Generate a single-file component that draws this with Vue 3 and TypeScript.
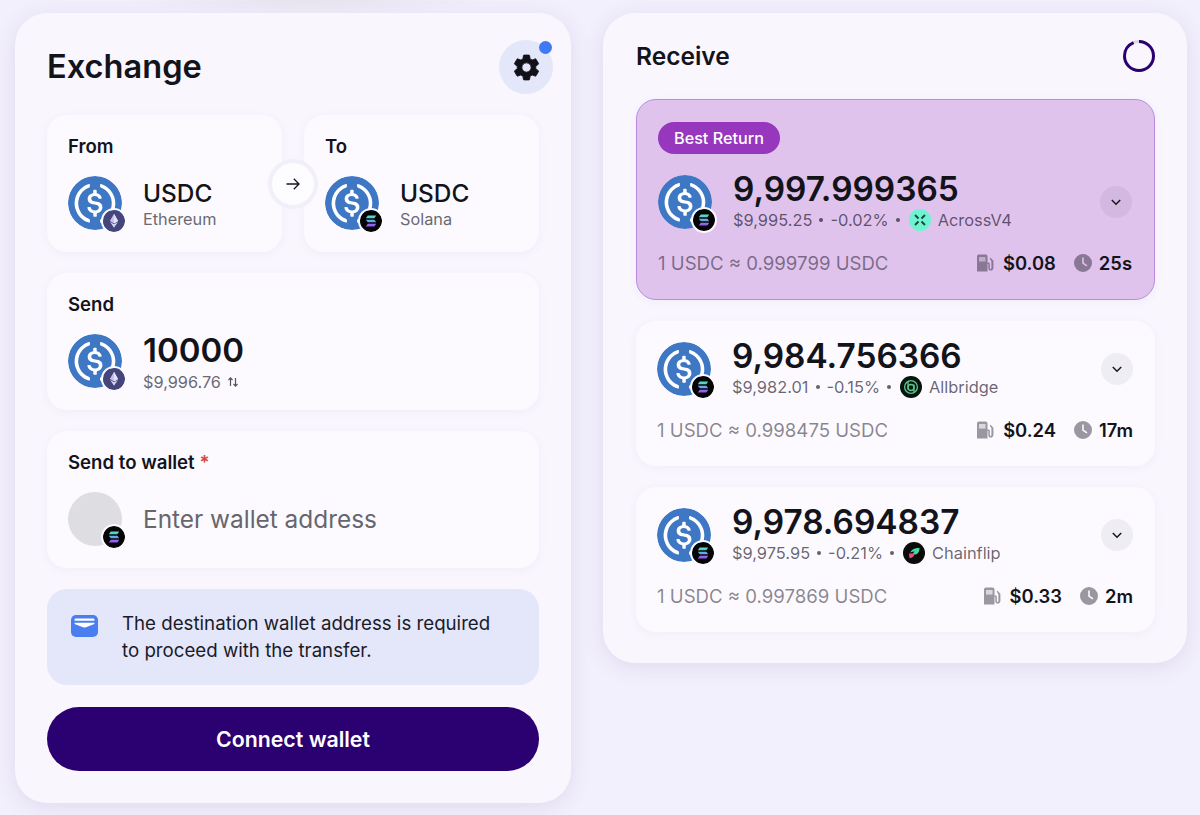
<script setup lang="ts">
interface Route {
  amount: string
  usd: string
  pct: string
  provider: string
  logo: string
  rate: string
  gas: string
  time: string
  best?: boolean
}

const routes: Route[] = [
  { amount: '9,997.999365', usd: '$9,995.25', pct: '-0.02%', provider: 'AcrossV4', logo: 'across', rate: '1 USDC ≈ 0.999799 USDC', gas: '$0.08', time: '25s', best: true },
  { amount: '9,984.756366', usd: '$9,982.01', pct: '-0.15%', provider: 'Allbridge', logo: 'allbridge', rate: '1 USDC ≈ 0.998475 USDC', gas: '$0.24', time: '17m' },
  { amount: '9,978.694837', usd: '$9,975.95', pct: '-0.21%', provider: 'Chainflip', logo: 'chainflip', rate: '1 USDC ≈ 0.997869 USDC', gas: '$0.33', time: '2m' },
]
</script>

<template>
  <svg class="defs" aria-hidden="true">
    <defs>
      <linearGradient id="solgrad" x1="0" y1="0" x2="0" y2="1">
        <stop offset="0" stop-color="#4fe3c0" />
        <stop offset="0.5" stop-color="#6aa6e8" />
        <stop offset="1" stop-color="#a04cf5" />
      </linearGradient>
      <symbol id="usdc" viewBox="0 0 2000 2000">
        <path d="M1000 2000c554.17 0 1000-445.83 1000-1000S1554.17 0 1000 0 0 445.83 0 1000s445.83 1000 1000 1000z" fill="#3e78c4" />
        <path d="M1275 1158.33c0-145.83-87.5-195.83-262.5-216.66-125-16.67-150-50-150-108.34s41.67-95.83 125-95.83c75 0 116.67 25 137.5 87.5 4.17 12.5 16.67 20.83 29.17 20.83h66.66c16.67 0 29.17-12.5 29.17-29.16v-4.17c-16.67-91.67-91.67-162.5-187.5-170.83v-100c0-16.67-12.5-29.17-33.33-33.34h-62.5c-16.67 0-29.17 12.5-33.34 33.34v95.83c-125 16.67-204.16 100-204.16 204.17 0 137.5 83.33 191.66 258.33 212.5 116.67 20.83 154.17 45.83 154.17 112.5s-58.34 112.5-137.5 112.5c-108.34 0-145.84-45.84-158.34-108.34-4.16-16.66-16.66-25-29.16-25h-70.84c-16.66 0-29.16 12.5-29.16 29.17v4.17c16.66 104.16 83.33 179.16 220.83 200v100c0 16.66 12.5 29.16 33.33 33.33h62.5c16.67 0 29.17-12.5 33.34-33.33v-100c125-20.84 208.33-108.34 208.33-220.84z" fill="#fff" />
        <path d="M787.5 1595.83c-325-116.66-491.67-479.16-370.83-800 62.5-175 200-308.33 370.83-370.83 16.67-8.33 25-20.83 25-41.67V325c0-16.67-8.33-29.17-25-33.33-4.17 0-12.5 0-16.67 4.16-395.83 125-612.5 545.84-487.5 941.67 75 233.33 254.17 412.5 487.5 487.5 16.67 8.33 33.34 0 37.5-16.67 4.17-4.16 4.17-8.33 4.17-16.66v-58.34c0-12.5-12.5-29.16-25-37.5zM1229.17 295.83c-16.67-8.33-33.34 0-37.5 16.67-4.17 4.17-4.17 8.33-4.17 16.67v58.33c0 16.67 12.5 33.33 25 41.67 325 116.66 491.67 479.16 370.83 800-62.5 175-200 308.33-370.83 370.83-16.67 8.33-25 20.83-25 41.67V1700c0 16.67 8.33 29.17 25 33.33 4.17 0 12.5 0 16.67-4.16 395.83-125 612.5-545.84 487.5-941.67-75-237.5-258.34-416.67-487.5-491.67z" fill="#fff" />
      </symbol>
      <symbol id="eth" viewBox="0 0 22 22">
        <circle cx="11" cy="11" r="11" fill="#45457c" />
        <path d="M11 3.800 6.900 11 11 13.400 15.100 11z" fill="#c3c0ea" />
        <path d="M11 3.800V13.400L15.100 11z" fill="#e4e2fa" />
        <path d="M7.100 12 11 17.800 14.900 12 11 14.300z" fill="#d6d4f3" />
      </symbol>
      <symbol id="sol" viewBox="0 0 22 22">
        <circle cx="11" cy="11" r="11" fill="#050505" />
        <path d="M7.800 5.600H16.200L14.400 8.300H5.800zM5.800 9.700H14.400L16.200 12.300H7.800zM7.800 13.700H16.200L14.400 16.400H5.800z" fill="url(#solgrad)" />
      </symbol>
      <symbol id="across" viewBox="0 0 22 22">
        <circle cx="11" cy="11" r="11" fill="#6cf3d0" />
        <path d="M6 6 9.500 9.500M16 6 12.500 9.500M6 16 9.500 12.500M16 16 12.500 12.500" fill="none" stroke="#24423c" stroke-width="1.800" />
      </symbol>
      <symbol id="allbridge" viewBox="0 0 22 22">
        <circle cx="11" cy="11" r="11" fill="#06150f" />
        <circle cx="11" cy="11" r="6.400" fill="none" stroke="#5fc78e" stroke-width="1.300" />
        <circle cx="11" cy="11.500" r="3" fill="none" stroke="#5fc78e" stroke-width="1.300" />
        <path d="M8 5.500v8M14 16.500v-8" fill="none" stroke="#5fc78e" stroke-width="1.300" />
      </symbol>
      <symbol id="chainflip" viewBox="0 0 22 22">
        <circle cx="11" cy="11" r="11" fill="#0b0b0b" />
        <path d="M7.500 10.500c.6-2.700 3.500-4.400 9-4.500 0 3.300-1 6-4.300 6.500H9.700c.4-1.500 1-2.300 2.100-3-1.700.1-3 .4-4.300 1z" fill="#46d9a1" />
        <path d="M6 11.500h5.400c0 2.700-1.900 4.500-4.800 4.700-.4-1.600-.6-3.200-.6-4.700z" fill="#f0468f" />
      </symbol>
      <symbol id="gas" viewBox="0 0 18 18">
        <path fill-rule="evenodd" d="M1 2.500C1 1.400 1.900.5 3 .5h6.500c1.100 0 2 .9 2 2V17.500H1zM3 3v4.500h6.500V3z" fill="currentColor" />
        <path d="M3 3h6.500v4.500H3z" fill="currentColor" opacity=".35" />
        <path d="M11.500 8.500h1c.8 0 1.300.6 1.300 1.300v4.200c0 .6.300 1 .8 1s.8-.4.8-1V7.300L13.700 4.500l.8-.8 2.900 3V14c0 1.500-1.200 2.600-2.700 2.600s-2.400-1.100-2.400-2.600v-3.900h-.8z" fill="currentColor" />
      </symbol>
      <symbol id="clock" viewBox="0 0 18 18">
        <path fill-rule="evenodd" d="M9 0a9 9 0 1 1 0 18A9 9 0 0 1 9 0zm-.8 3.600v6l4.300 2.900.9-1.300-3.600-2.400V3.600z" fill="currentColor" />
      </symbol>
    </defs>
  </svg>

  <main class="page">
    <section class="panel exchange">
      <header class="ex-head">
        <h1>Exchange</h1>
        <button class="gear" type="button" aria-label="Settings">
          <svg viewBox="0 0 24 24" width="31" height="31">
            <path fill="#111118" stroke="#111118" stroke-width=".7" d="M19.140 12.940c.04-.3.06-.61.06-.94 0-.32-.02-.64-.07-.94l2.030-1.580c.18-.14.23-.41.12-.61l-1.920-3.320c-.12-.22-.37-.29-.59-.22l-2.390.96c-.5-.38-1.030-.7-1.620-.94l-.36-2.540c-.04-.24-.24-.41-.48-.41h-3.840c-.24 0-.43.17-.47.41l-.36 2.540c-.59.24-1.130.57-1.620.94l-2.390-.96c-.22-.08-.47 0-.59.22L2.740 8.870c-.12.21-.08.47.12.61l2.030 1.580c-.05.3-.09.63-.09.94s.02.64.07.94l-2.030 1.580c-.18.14-.23.41-.12.61l1.920 3.320c.12.22.37.29.59.22l2.390-.96c.5.38 1.030.7 1.620.94l.36 2.540c.05.24.24.41.48.41h3.840c.24 0 .44-.17.47-.41l.36-2.540c.59-.24 1.130-.56 1.620-.94l2.390.96c.22.08.47 0 .59-.22l1.920-3.320c.12-.22.07-.47-.12-.61l-2.010-1.580zM12 15.600c-1.980 0-3.600-1.620-3.600-3.600s1.620-3.600 3.600-3.600 3.600 1.620 3.600 3.600-1.620 3.600-3.600 3.600z" />
          </svg>
          <span class="gear-dot"></span>
        </button>
      </header>

      <div class="stack">
        <div class="pair">
          <div class="box">
            <div class="label">From</div>
            <div class="token-row">
              <span class="coin">
                <svg class="coin-main"><use href="#usdc" /></svg>
                <svg class="coin-badge"><use href="#eth" /></svg>
              </span>
              <div class="token-text">
                <div class="sym">USDC</div>
                <div class="net">Ethereum</div>
              </div>
            </div>
          </div>
          <button class="swap" type="button" aria-label="Swap direction">
            <svg viewBox="0 0 16 16" width="16" height="16">
              <path d="M1.500 8h12.500M8.800 2.800 14 8l-5.200 5.200" fill="none" stroke="#15151c" stroke-width="1.300" />
            </svg>
          </button>
          <div class="box">
            <div class="label">To</div>
            <div class="token-row">
              <span class="coin">
                <svg class="coin-main"><use href="#usdc" /></svg>
                <svg class="coin-badge"><use href="#sol" /></svg>
              </span>
              <div class="token-text">
                <div class="sym">USDC</div>
                <div class="net">Solana</div>
              </div>
            </div>
          </div>
        </div>

        <div class="box">
          <div class="label">Send</div>
          <div class="token-row">
            <span class="coin">
              <svg class="coin-main"><use href="#usdc" /></svg>
              <svg class="coin-badge"><use href="#eth" /></svg>
            </span>
            <div class="token-text send-text">
              <div class="send-amount">10000</div>
              <div class="net send-usd">
                $9,996.76
                <svg viewBox="0 0 12 12" width="12" height="12">
                  <path d="M3.500 10V2.200M1.500 4 3.500 1.800 5.500 4M8.500 2v7.800M6.500 8l2 2.200 2-2.200" fill="none" stroke="#55555e" stroke-width="1.200" />
                </svg>
              </div>
            </div>
          </div>
        </div>

        <div class="box">
          <div class="label">Send to wallet <span class="req">*</span></div>
          <div class="token-row">
            <span class="coin">
              <span class="coin-empty"></span>
              <svg class="coin-badge"><use href="#sol" /></svg>
            </span>
            <input class="addr" type="text" placeholder="Enter wallet address" />
          </div>
        </div>

        <div class="notice">
          <svg class="notice-icon" viewBox="0 0 27 22" width="27" height="22">
            <rect x="0" y="0" width="27" height="22" rx="5" fill="#4a7df0" />
            <path d="M4.500 3.500h18c.6 0 .9.300.9.800v1.400H3.600V4.300c0-.5.300-.8.900-.8z" fill="#fff" />
            <path d="M3.600 7.800h19.800v1.200l-8.400 3.300c-1 .4-2 .4-3 0L3.600 9z" fill="#fff" />
          </svg>
          <p>The destination wallet address is required<br />to proceed with the transfer.</p>
        </div>

        <button class="connect" type="button">Connect wallet</button>
      </div>
    </section>

    <section class="panel receive">
      <header class="rc-head">
        <h2>Receive</h2>
        <svg class="ring" viewBox="0 0 32 32" width="32" height="32">
          <circle cx="16" cy="16" r="14.500" fill="none" stroke="#dcdae2" stroke-width="3" />
          <circle cx="16" cy="16" r="14.500" fill="none" stroke="#2b0070" stroke-width="3" stroke-dasharray="85 91.100" transform="rotate(-90 16 16)" />
        </svg>
      </header>

      <div class="routes">
        <article v-for="r in routes" :key="r.provider" class="route" :class="{ best: r.best }">
          <span v-if="r.best" class="tag">Best Return</span>
          <div class="route-main">
            <span class="coin">
              <svg class="coin-main"><use href="#usdc" /></svg>
              <svg class="coin-badge"><use href="#sol" /></svg>
            </span>
            <div class="route-text">
              <div class="amount">{{ r.amount }}</div>
              <div class="meta">
                <span>{{ r.usd }}</span>
                <i class="dot"></i>
                <span>{{ r.pct }}</span>
                <i class="dot"></i>
                <svg class="prov" width="22" height="22"><use :href="'#' + r.logo" /></svg>
                <span>{{ r.provider }}</span>
              </div>
            </div>
            <button class="chev" type="button" aria-label="Expand route">
              <svg viewBox="0 0 12 12" width="12" height="12">
                <path d="M1.800 4 6 8.200 10.200 4" fill="none" stroke="#15151c" stroke-width="1.500" />
              </svg>
            </button>
          </div>
          <div class="route-foot">
            <span class="rate">{{ r.rate }}</span>
            <div class="stats">
              <svg class="stat-icon" width="18" height="18"><use href="#gas" /></svg>
              <span class="stat gas">{{ r.gas }}</span>
              <svg class="stat-icon" width="18" height="18"><use href="#clock" /></svg>
              <span class="stat">{{ r.time }}</span>
            </div>
          </div>
        </article>
      </div>
    </section>
  </main>
</template>

<style>
html,
body {
  margin: 0;
  background: #f3f0fd;
}
</style>

<style scoped>
.defs {
  position: absolute;
  width: 0;
  height: 0;
}
.page {
  display: flex;
  align-items: flex-start;
  gap: 32px;
  width: 1200px;
  height: 815px;
  box-sizing: border-box;
  padding: 13px 13px 0 15px;
  overflow: hidden;
  background: radial-gradient(ellipse 190px 13px at 310px 0, #e6e4ee, rgba(230, 228, 238, 0) 100%), #f3f0fd;
  font-family: Inter, "Liberation Sans", sans-serif;
  color: #13131a;
}
.panel {
  box-sizing: border-box;
  background: #f9f6fe;
  border-radius: 32px;
  box-shadow: 0 4px 22px rgba(74, 60, 120, 0.12);
}
.exchange {
  width: 556px;
  height: 790px;
  padding: 27px 32px 32px;
}
.receive {
  width: 584px;
  height: 650px;
  padding: 27px 32px 31px 33px;
}
.ex-head {
  display: flex;
  align-items: center;
  justify-content: space-between;
  height: 54px;
  margin-right: -14px;
  margin-bottom: 21px;
}
h1 {
  margin: 0;
  font-size: 32.6px;
  font-weight: 600;
  line-height: 53px;
  padding-bottom: 1px;
}
.gear {
  position: relative;
  display: flex;
  align-items: center;
  justify-content: center;
  width: 54px;
  height: 54px;
  padding: 0;
  border: 0;
  border-radius: 50%;
  background: #e4e6fa;
}
.gear-dot {
  position: absolute;
  top: 1px;
  right: 1px;
  width: 13px;
  height: 13px;
  border-radius: 50%;
  background: #4179f5;
}
.stack {
  display: flex;
  flex-direction: column;
  gap: 21px;
}
.pair {
  position: relative;
  display: grid;
  grid-template-columns: 235px 235px;
  justify-content: space-between;
}
.box {
  box-sizing: border-box;
  height: 137px;
  padding: 20px 21px 22px;
  background: #fcfaff;
  border-radius: 20px;
  box-shadow: 0 2px 10px rgba(90, 70, 140, 0.05);
}
.label {
  margin-bottom: 19px;
  font-size: 18.6px;
  font-weight: 600;
  line-height: 22px;
}
.req {
  color: #d8433a;
}
.token-row {
  display: flex;
  align-items: center;
  gap: 21px;
  height: 54px;
}
.token-text {
  padding-top: 1px;
}
.send-text {
  padding-top: 2px;
}
.coin {
  position: relative;
  flex: none;
  display: block;
  width: 54px;
  height: 54px;
}
.coin-main,
.coin-empty {
  display: block;
  width: 54px;
  height: 54px;
  border-radius: 50%;
}
.coin-empty {
  background: #dddde2;
}
.coin-badge {
  position: absolute;
  right: -3px;
  bottom: -2px;
  width: 22px;
  height: 22px;
  border-radius: 50%;
  box-shadow: 0 0 0 2px #fcfaff;
}
.sym {
  font-size: 24.4px;
  font-weight: 500;
  line-height: 30px;
}
.net {
  margin-top: 1px;
  color: #6a6a73;
  font-size: 16.3px;
  line-height: 20px;
}
.send-amount {
  font-size: 33px;
  font-weight: 600;
  line-height: 38px;
}
.send-usd {
  display: flex;
  align-items: center;
  gap: 6px;
  line-height: 24px;
}
.swap {
  position: absolute;
  left: 221px;
  top: 44px;
  display: flex;
  align-items: center;
  justify-content: center;
  box-sizing: border-box;
  width: 50px;
  height: 50px;
  padding: 0;
  border: 4px solid #f1eff8;
  border-radius: 50%;
  background: #fdfcff;
}
.addr {
  flex: 1;
  min-width: 0;
  padding: 0;
  border: 0;
  outline: 0;
  background: transparent;
  font: 400 24.4px/30px Inter, "Liberation Sans", sans-serif;
  color: #13131a;
}
.addr::placeholder {
  color: #66666f;
  opacity: 1;
}
.notice {
  display: flex;
  align-items: flex-start;
  gap: 24px;
  height: 96px;
  box-sizing: border-box;
  padding: 21px 24px;
  border-radius: 20px;
  background: #e4e6fa;
}
.notice-icon {
  flex: none;
  margin-top: 5px;
}
.notice p {
  margin: 0;
  font-size: 18.7px;
  line-height: 27px;
  white-space: nowrap;
  color: #1b1b28;
}
.connect {
  height: 64px;
  margin-top: 1px;
  border: 0;
  border-radius: 32px;
  background: #2b0070;
  color: #fff;
  font: 600 21.3px/24px Inter, "Liberation Sans", sans-serif;
}
.rc-head {
  display: flex;
  align-items: center;
  justify-content: space-between;
  height: 32px;
  margin-bottom: 27px;
}
h2 {
  margin: 0;
  font-size: 24.5px;
  font-weight: 600;
  line-height: 32px;
}
.routes {
  display: flex;
  flex-direction: column;
  gap: 21px;
}
.route {
  box-sizing: border-box;
  padding: 21px 22px 25px 21px;
  border-radius: 20px;
  background: #fcfaff;
  box-shadow: 0 2px 10px rgba(90, 70, 140, 0.05);
}
.route.best {
  border: 1px solid #bd8bdc;
  padding: 22px 22px 25px 21px;
  background: #dfc3ec;
}
.tag {
  display: block;
  width: fit-content;
  height: 32px;
  margin-bottom: 21px;
  padding: 0 16px;
  border-radius: 16px;
  background: #9637bd;
  color: #fff;
  font-size: 16.2px;
  font-weight: 500;
  line-height: 32px;
}
.route-main {
  display: flex;
  align-items: center;
  gap: 21px;
  height: 54px;
}
.route-text {
  flex: 1;
  min-width: 0;
  padding-bottom: 2px;
}
.amount {
  font-size: 33.4px;
  font-weight: 600;
  line-height: 34px;
}
.meta {
  display: flex;
  align-items: center;
  gap: 7px;
  height: 22px;
  margin-top: 3px;
  font-size: 16.4px;
  color: rgba(20, 15, 30, 0.65);
}
.dot {
  width: 4px;
  height: 4px;
  border-radius: 50%;
  background: currentColor;
}
.prov {
  flex: none;
  margin-left: 2px;
}
.chev {
  flex: none;
  display: flex;
  align-items: center;
  justify-content: center;
  width: 32px;
  height: 32px;
  padding: 0;
  border: 0;
  border-radius: 50%;
  background: rgba(40, 30, 70, 0.06);
}
.route-foot {
  display: flex;
  align-items: center;
  justify-content: space-between;
  height: 22px;
  margin-top: 23px;
}
.rate {
  font-size: 18.6px;
  color: rgba(20, 15, 30, 0.5);
}
.stats {
  display: flex;
  align-items: center;
}
.stat-icon {
  display: block;
  color: rgba(20, 15, 30, 0.42);
}
.stat {
  margin-left: 7px;
  font-size: 18.4px;
  font-weight: 600;
}
.stat.gas {
  margin-left: 9px;
  margin-right: 18px;
}
</style>
